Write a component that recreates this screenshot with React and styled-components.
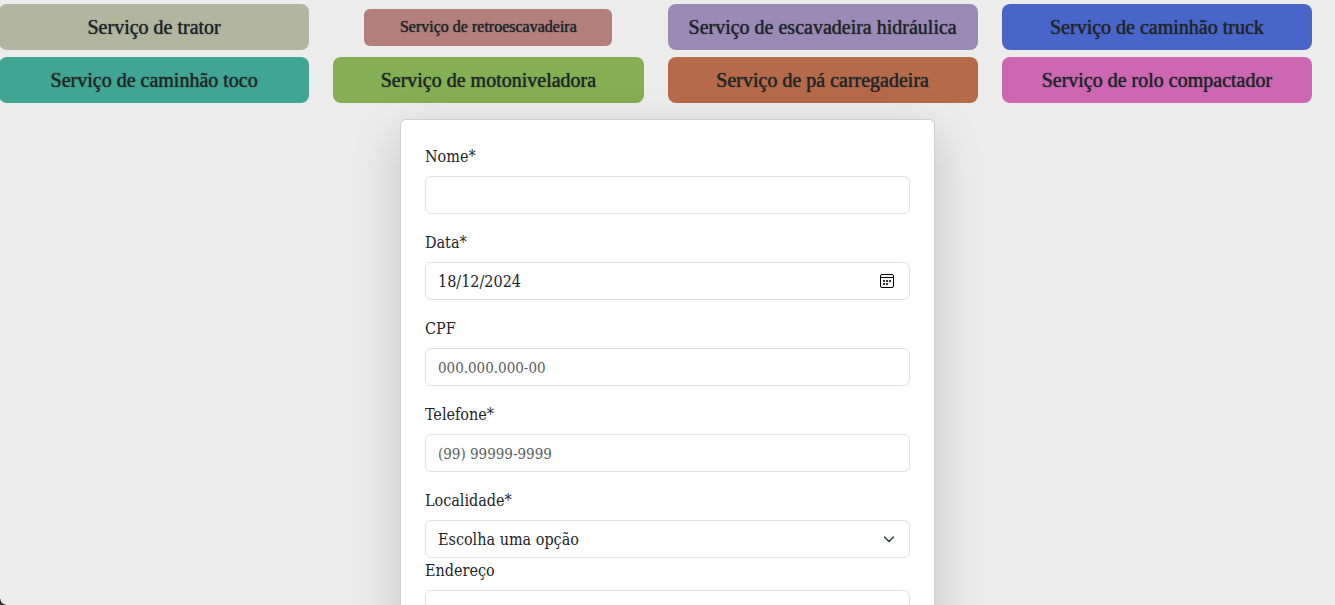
import React from "react";
import styled, { createGlobalStyle, css } from "styled-components";

const GlobalStyle = createGlobalStyle`
  *, *::before, *::after { box-sizing: border-box; }
  body {
    margin: 0;
    background: #ececec;
    color: #212529;
    font-family: "DejaVu Serif Condensed", "DejaVu Serif", serif;
    font-size: 16px;
    line-height: 24px;
    overflow-x: hidden;
  }
`;

const Services = styled.nav`
  display: grid;
  grid-template-columns: repeat(4, 1fr);
  align-items: center;
  column-gap: 24px;
  row-gap: 7px;
  margin: 4px 23px 16px -1px;
`;

const ServiceButton = styled.button`
  height: 46px;
  padding: 0;
  border: 0;
  border-radius: 8px;
  background: ${(p) => p.$color};
  color: #212529;
  font-family: "Liberation Serif", serif;
  font-size: 20px;
  font-weight: 500;
  line-height: 24px;
  text-shadow: 0 0 1px #212529;
  white-space: nowrap;
  cursor: pointer;
  ${(p) =>
    p.$small &&
    css`
      justify-self: center;
      width: 80%;
      height: 37px;
      border-radius: 6px;
      font-size: 16px;
    `}
`;

const FormCard = styled.form`
  position: relative;
  width: calc(40% + 1px);
  margin: 0 auto 48px;
  padding: 24px;
  border: 1px solid #cfcfcf;
  border-radius: 6px;
  background: #fff;
  box-shadow: 0 16px 48px rgba(0, 0, 0, 0.175);
`;

const Field = styled.div`
  margin-bottom: ${(p) => (p.$tight ? 0 : 16)}px;
`;

const Label = styled.label`
  display: block;
  margin-bottom: 6px;
  line-height: 26px;
`;

const Control = styled.div`
  display: flex;
  align-items: center;
  height: 38px;
  border: 1px solid #dee2e6;
  border-radius: 6px;
  background: #fff;
  &:focus-within { border-color: #86b7fe; }
`;

const fieldText = css`
  flex: 1;
  min-width: 0;
  height: 36px;
  padding: 0 12px;
  border: 0;
  outline: 0;
  background: transparent;
  color: #212529;
  font: inherit;
`;

const Input = styled.input`
  ${fieldText}
  &::placeholder { color: #595c5f; font-size: 15px; opacity: 1; }
`;

const SelectBox = styled(Control)`
  display: grid;
  align-items: center;
  svg {
    grid-area: 1 / 1;
    justify-self: end;
    margin-right: 12px;
    pointer-events: none;
  }
`;

const Select = styled.select`
  ${fieldText}
  grid-area: 1 / 1;
  width: 100%;
  padding-top: 2px;
  appearance: none;
`;

const CalendarButton = styled.button`
  display: flex;
  margin-right: 14px;
  padding: 0;
  border: 0;
  background: transparent;
  cursor: pointer;
`;

const WindowCorner = styled.div`
  position: fixed;
  left: 0;
  bottom: 0;
  width: 6px;
  height: 6px;
  background: radial-gradient(circle at top right, transparent 5px, #333 6px);
`;

const services = [
  { name: "Serviço de trator", color: "#b2b69f" },
  { name: "Serviço de retroescavadeira", color: "#b27f7a", small: true },
  { name: "Serviço de escavadeira hidráulica", color: "#9c8ab6" },
  { name: "Serviço de caminhão truck", color: "#4965c9" },
  { name: "Serviço de caminhão toco", color: "#40a592" },
  { name: "Serviço de motoniveladora", color: "#85af53" },
  { name: "Serviço de pá carregadeira", color: "#b76a4a" },
  { name: "Serviço de rolo compactador", color: "#cd67b2" },
];

const CalendarIcon = () => (
  <svg width="16" height="16" viewBox="0 0 16 16" aria-hidden="true">
    <rect x="1.5" y="1.5" width="13" height="13" rx="1.5" fill="none" stroke="#000" />
    <path d="M1.5 4.5h13" stroke="#000" />
    <path
      d="M4 7h2v2H4zM7 7h2v2H7zM10 7h2v2h-2zM4 10h2v2H4zM7 10h2v2H7z"
      fill="#333"
    />
  </svg>
);

const ChevronIcon = () => (
  <svg width="16" height="12" viewBox="0 0 16 12" aria-hidden="true">
    <path
      d="m3.500 4 4.500 4.500L12.500 4"
      fill="none"
      stroke="#343a40"
      strokeWidth="1.5"
      strokeLinecap="round"
      strokeLinejoin="round"
    />
  </svg>
);

function TextField({ id, label, ...rest }) {
  return (
    <Field>
      <Label htmlFor={id}>{label}</Label>
      <Control>
        <Input id={id} type="text" {...rest} />
      </Control>
    </Field>
  );
}

export default function App() {
  return (
    <>
      <GlobalStyle />
      <Services>
        {services.map((s) => (
          <ServiceButton key={s.name} type="button" $color={s.color} $small={s.small}>
            {s.name}
          </ServiceButton>
        ))}
      </Services>
      <FormCard>
        <TextField id="nome" label="Nome*" />
        <Field>
          <Label htmlFor="data">Data*</Label>
          <Control>
            <Input id="data" type="text" defaultValue="18/12/2024" />
            <CalendarButton type="button" aria-label="Abrir calendário">
              <CalendarIcon />
            </CalendarButton>
          </Control>
        </Field>
        <TextField id="cpf" label="CPF" placeholder="000.000.000-00" />
        <TextField id="telefone" label="Telefone*" placeholder="(99) 99999-9999" />
        <Field $tight>
          <Label htmlFor="localidade">Localidade*</Label>
          <SelectBox>
            <Select id="localidade">
              <option>Escolha uma opção</option>
            </Select>
            <ChevronIcon />
          </SelectBox>
        </Field>
        <TextField id="endereco" label="Endereço" />
      </FormCard>
      <WindowCorner />
    </>
  );
}
